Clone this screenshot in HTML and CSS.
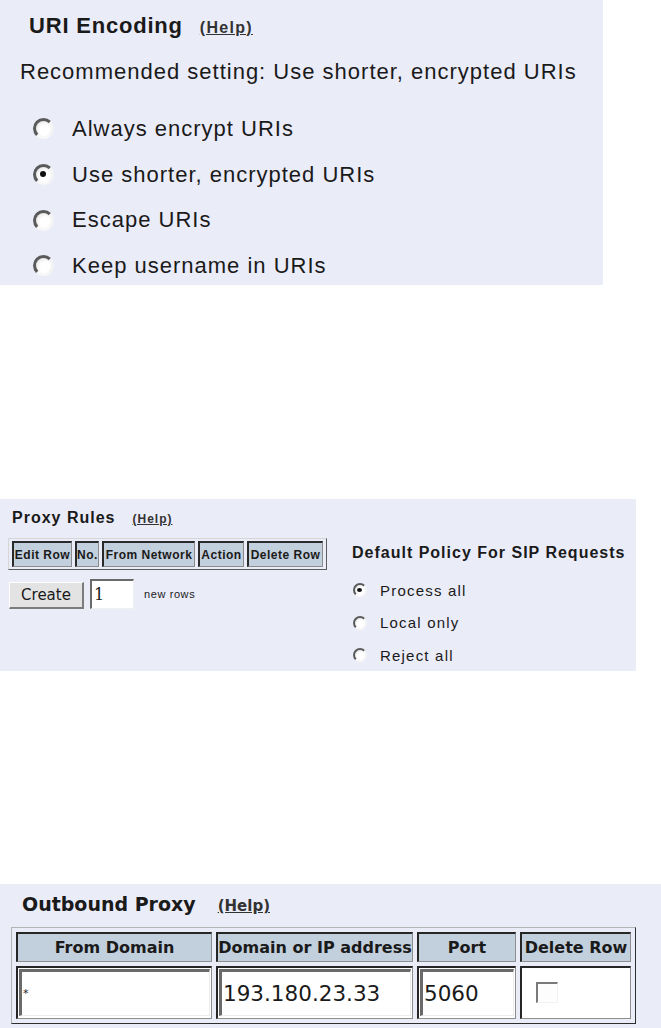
FILE: index.html
```html
<!DOCTYPE html>
<html lang="en">
<head>
<meta charset="utf-8">
<title>SIP settings</title>
<link rel="stylesheet" href="styles.css">
</head>
<body>
<section class="panel uri">
  <div class="uri-head"><span class="uri-title">URI Encoding</span><a class="help uri-help" href="#">(Help)</a></div>
  <p class="uri-note">Recommended setting: Use shorter, encrypted URIs</p>
  <ul class="uri-options">
    <li><span class="radio lg"></span>Always encrypt URIs</li>
    <li><span class="radio lg on"></span>Use shorter, encrypted URIs</li>
    <li><span class="radio lg"></span>Escape URIs</li>
    <li><span class="radio lg"></span>Keep username in URIs</li>
  </ul>
</section>

<section class="panel rules">
  <div class="rules-left">
    <div class="rules-head"><span>Proxy Rules</span><a class="help rules-help" href="#">(Help)</a></div>
    <table class="rules-table">
      <tr>
        <th class="c-edit">Edit Row</th>
        <th class="c-no">No.</th>
        <th class="c-net">From Network</th>
        <th class="c-act">Action</th>
        <th class="c-del">Delete Row</th>
      </tr>
    </table>
    <div class="create-row">
      <button class="create-btn" type="button">Create</button>
      <input class="rows-input" type="text" value="1">
      <span class="new-rows">new rows</span>
    </div>
  </div>
  <div class="rules-right">
    <div class="policy-head">Default Policy For SIP Requests</div>
    <ul class="policy-options">
      <li><span class="radio sm on"></span>Process all</li>
      <li><span class="radio sm"></span>Local only</li>
      <li><span class="radio sm"></span>Reject all</li>
    </ul>
  </div>
</section>

<section class="panel outbound">
  <div class="ob-head"><span>Outbound Proxy</span><a class="help ob-help" href="#">(Help)</a></div>
  <table class="ob-table">
    <tr class="ob-hrow">
      <th class="o1">From Domain</th>
      <th class="o2">Domain or IP address</th>
      <th class="o3">Port</th>
      <th class="o4">Delete Row</th>
    </tr>
    <tr class="ob-drow">
      <td><input class="ob-input star" type="text" value="*"></td>
      <td><input class="ob-input" type="text" value="193.180.23.33"></td>
      <td><input class="ob-input" type="text" value="5060"></td>
      <td><span class="check"></span></td>
    </tr>
  </table>
</section>
</body>
</html>
```

FILE: styles.css
```css
* { box-sizing: border-box; }

body {
  margin: 0;
  background: #ffffff;
  color: #1a1a1a;
  font-family: "Liberation Sans", Arial, sans-serif;
}

.panel { background: #eaecf8; }

.help {
  color: #333333;
  text-decoration: underline;
  font-weight: bold;
}

/* ---------- radios ---------- */
.radio {
  position: relative;
  flex: none;
  border-radius: 50%;
  border-style: solid;
  border-color: #5a5a5a #f4f4f4 #f8f8f8 #5a5a5a;
  background: radial-gradient(circle at 62% 62%, #ffffff 40%, #dcdcdc 100%);
}
.radio.lg { width: 21px; height: 21px; border-width: 3px; margin-left: -1px; }
.radio.sm { width: 14px; height: 14px; border-width: 2px; }
.radio.on::after {
  content: "";
  position: absolute;
  border-radius: 50%;
  background: #111;
}
.radio.lg.on::after { width: 6px; height: 6px; left: 4px; top: 4px; }
.radio.sm.on::after { width: 5px; height: 4px; left: 2px; top: 3px; }

/* ---------- URI encoding ---------- */
.uri {
  width: 603px;
  height: 285px;
  padding-top: 13px;
}
.uri-head {
  display: flex;
  align-items: baseline;
  gap: 17px;
  margin-left: 29px;
  line-height: 26px;
}
.uri-title {
  font-size: 22px;
  font-weight: bold;
  letter-spacing: 0.8px;
}
.uri-help { font-size: 16px; letter-spacing: 1.3px; }
.uri-note {
  margin: 18px 0 0 20px;
  font-size: 22px;
  letter-spacing: 1px;
  line-height: 26px;
}
.uri-options {
  list-style: none;
  margin: 21px 0 0;
  padding: 0 0 0 34px;
  display: grid;
  grid-auto-rows: 45.7px;
}
.uri-options li {
  display: flex;
  align-items: center;
  gap: 18px;
  font-size: 22px;
  letter-spacing: 1px;
}

/* ---------- Proxy rules ---------- */
.rules {
  margin-top: 214px;
  width: 636px;
  height: 172px;
  padding: 9px 0 0 8px;
  display: flex;
}
.rules-left { width: 320px; }
.rules-head {
  display: flex;
  align-items: baseline;
  gap: 17px;
  margin-left: 4px;
  font-size: 16px;
  font-weight: bold;
  letter-spacing: 1px;
  line-height: 20px;
}
.rules-help { font-size: 12px; letter-spacing: 1px; }

.rules-table {
  margin-top: 9px;
  border-collapse: separate;
  border-spacing: 3px 2px;
  border: 1px solid;
  border-color: #d6d6d6 #5a5a5a #5a5a5a #d6d6d6;
}
.rules-table th {
  height: 26px;
  padding: 0;
  background: #c2cfdc;
  border-style: solid;
  border-width: 2px 1px 1px 2px;
  border-color: #2a2a2a #8c8c8c #8c8c8c #2a2a2a;
  font-size: 12px;
  letter-spacing: 0.5px;
  font-weight: bold;
  text-align: center;
  white-space: nowrap;
}
.c-edit { width: 60px; }
.c-no { width: 24px; }
.c-net { width: 93px; }
.c-act { width: 46px; }
.c-del { width: 76px; }

.create-row {
  margin-top: 9px;
  display: flex;
  align-items: center;
}
.create-btn {
  margin: 2px 0 0 1px;
  width: 75px;
  height: 27px;
  padding: 0;
  background: #e3e3e3;
  border-style: solid;
  border-width: 1px 2px 2px 1px;
  border-color: #ffffff #7c7c7c #7c7c7c #ffffff;
  font-family: "DejaVu Sans", sans-serif;
  font-size: 15px;
  color: #1a1a1a;
}
.rows-input {
  margin-left: 6px;
  width: 44px;
  height: 30px;
  padding: 0 0 0 2px;
  background: #ffffff;
  border-style: solid;
  border-width: 2px 1px 1px 2px;
  border-color: #6a6a6a #f0f0f0 #f0f0f0 #6a6a6a;
  font-family: "DejaVu Serif", serif;
  font-size: 16px;
  color: #1a1a1a;
}
.new-rows {
  margin-left: 10px;
  font-size: 11px;
  letter-spacing: 0.6px;
}

.rules-right {
  margin-left: 24px;
  padding-top: 35px;
}
.policy-head {
  font-size: 16px;
  font-weight: bold;
  letter-spacing: 1px;
  line-height: 20px;
}
.policy-options {
  list-style: none;
  margin: 11px 0 0;
  padding: 0 0 0 1px;
  display: grid;
  grid-auto-rows: 32.5px;
}
.policy-options li {
  display: flex;
  align-items: center;
  gap: 13px;
  font-size: 15px;
  letter-spacing: 1.2px;
}

/* ---------- Outbound proxy ---------- */
.outbound {
  margin-top: 213px;
  height: 144px;
  padding: 8px 0 0 11px;
  font-family: "DejaVu Sans", sans-serif;
}
.ob-head {
  display: flex;
  align-items: baseline;
  gap: 22px;
  margin-left: 11px;
  font-size: 19px;
  font-weight: bold;
  line-height: 24px;
}
.ob-help { font-size: 15px; }

.ob-table {
  margin-top: 9px;
  border-collapse: separate;
  border-spacing: 4px;
  border: 1px solid;
  border-color: #b4b4b4 #2e2e2e #2e2e2e #b4b4b4;
}
.ob-table th,
.ob-table td {
  padding: 0;
  border-style: solid;
  border-width: 2px 1px 1px 2px;
  border-color: #262626 #8e8e8e #8e8e8e #262626;
}
.ob-table th {
  height: 30px;
  background: #c2cfdc;
  font-size: 16px;
  font-weight: bold;
  white-space: nowrap;
}
.ob-table td {
  height: 53px;
  background: #ffffff;
  padding: 1px 1px 2px 1px;
}
.o1 { width: 196px; }
.o2 { width: 197px; }
.o3 { width: 99px; }
.o4 { width: 111px; }

.ob-input {
  display: block;
  width: 100%;
  height: 47px;
  padding: 0 0 0 1px;
  background: #ffffff;
  border-style: solid;
  border-width: 3px 1px 1px 3px;
  border-color: #6a6a6a #ececec #ececec #6a6a6a;
  font-family: "DejaVu Sans", sans-serif;
  font-size: 21.5px;
  color: #1a1a1a;
}
.ob-input.star { font-size: 11px; }

.check {
  display: block;
  margin-left: 13px;
  width: 22px;
  height: 21px;
  border-style: solid;
  border-width: 2px 1px 1px 2px;
  border-color: #7a7a7a #f2f2f2 #f2f2f2 #7a7a7a;
  background: #fdfdfd;
}
```
